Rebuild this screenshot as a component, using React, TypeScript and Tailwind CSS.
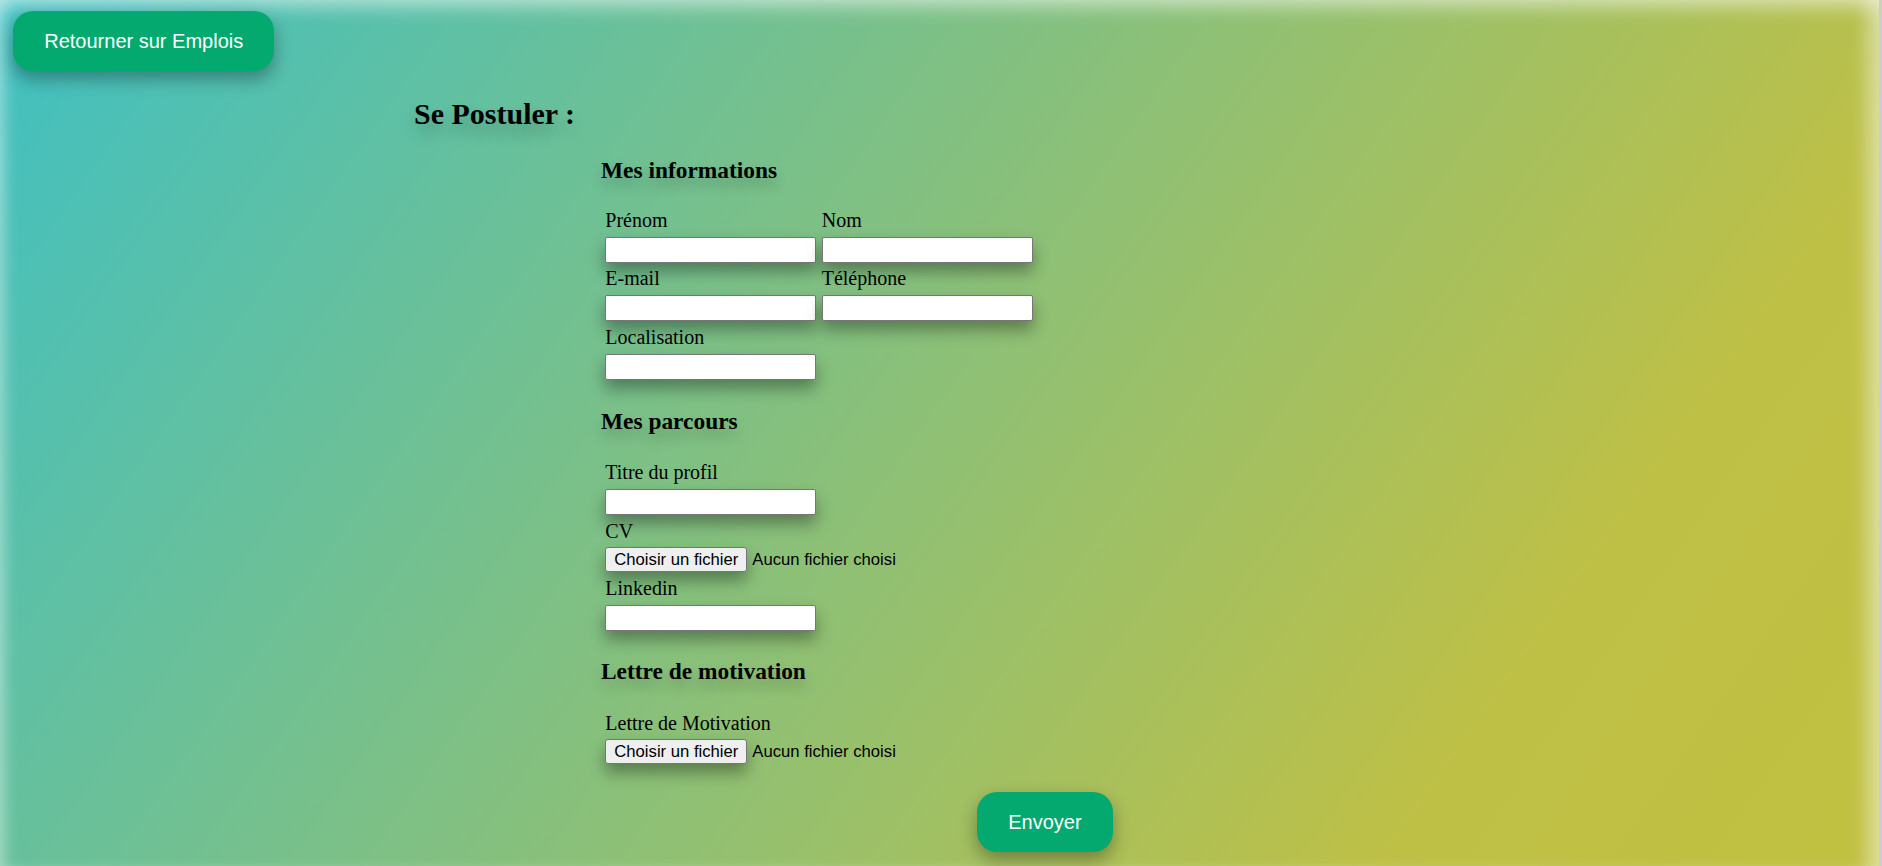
import React from "react";

const labelCls =
  "block h-[23px] leading-[23px] text-[20px] text-black font-['Liberation_Serif','Times_New_Roman',serif] whitespace-nowrap";
const inputCls =
  "block mt-[4.75px] h-[26px] w-[211px] bg-white border border-[#767676] rounded-[2px] px-[2px] text-[16.67px] font-['Liberation_Sans',Arial,sans-serif] shadow-[0_9px_16px_rgba(0,0,0,0.35)] outline-none";
const h3Cls =
  "w-fit h-[27px] leading-[27px] text-[23.4px] font-bold text-black font-['Liberation_Serif','Times_New_Roman',serif] [text-shadow:0_8px_14px_rgba(0,0,0,0.22)] whitespace-nowrap";
const btnCls =
  "block w-fit px-[31.25px] py-[18.5px] leading-[23px] text-[20px] text-white bg-[#03a96f] rounded-[20px] font-['Liberation_Sans',Arial,sans-serif] shadow-[0_8px_18px_rgba(0,0,0,0.33)] whitespace-nowrap";

function Field({ label }: { label: string }) {
  return (
    <div className="flex flex-col">
      <label className={labelCls}>{label}</label>
      <input type="text" className={inputCls} />
    </div>
  );
}

function FileField({ label }: { label: string }) {
  return (
    <div className="flex flex-col">
      <label className={labelCls}>{label}</label>
      <div className="mt-[4.75px] flex items-center h-[25px] font-['Liberation_Sans',Arial,sans-serif] text-[16.67px] text-black whitespace-nowrap">
        <span className="h-[25px] flex items-center px-[8px] bg-[#efefef] border border-[#767676] rounded-[3px] shadow-[0_9px_16px_rgba(0,0,0,0.35)]">
          Choisir un fichier
        </span>
        <span className="ml-[5px]">Aucun fichier choisi</span>
      </div>
    </div>
  );
}

export default function App() {
  return (
    <div className="h-[866px] w-full overflow-hidden border-r-[3px] border-r-[#cdcdcd] bg-[linear-gradient(125deg,#40c0c2_0%,#bec046_80%,#c0c040_100%)] shadow-[inset_0_18px_18px_-10px_rgba(255,255,255,0.45),inset_14px_0_14px_-8px_rgba(255,255,255,0.35),inset_-22px_0_18px_-10px_rgba(255,255,255,0.45)]">
      <div className="pl-[13px] pt-[11px]">
        <button type="button" className={btnCls}>
          Retourner sur Emplois
        </button>
      </div>

      <h2 className="ml-[414px] mt-[26.2px] w-fit h-[34px] leading-[34px] text-[30px] font-bold text-black font-['Liberation_Serif','Times_New_Roman',serif] [text-shadow:0_10px_16px_rgba(0,0,0,0.22)] whitespace-nowrap">
        Se Postuler :
      </h2>

      <form className="ml-[601px] w-fit" onSubmit={(e) => e.preventDefault()}>
        <h3 className={`mt-[25.4px] ${h3Cls}`}>Mes informations</h3>
        <div className="ml-[4.3px] mt-[25.4px] grid grid-cols-[211px_211px] gap-x-[5.4px] gap-y-[4.75px]">
          <Field label="Prénom" />
          <Field label="Nom" />
          <Field label="E-mail" />
          <Field label="Téléphone" />
          <Field label="Localisation" />
        </div>

        <h3 className={`mt-[27.8px] ${h3Cls}`}>Mes parcours</h3>
        <div className="ml-[4.3px] mt-[26.7px] flex flex-col gap-y-[4.75px]">
          <Field label="Titre du profil" />
          <FileField label="CV" />
          <Field label="Linkedin" />
        </div>

        <h3 className={`mt-[27.5px] ${h3Cls}`}>Lettre de motivation</h3>
        <div className="ml-[4.3px] mt-[26.2px] flex flex-col">
          <FileField label="Lettre de Motivation" />
        </div>

        <div className="ml-[376px] mt-[28px]">
          <button type="submit" className={btnCls}>
            Envoyer
          </button>
        </div>
      </form>
    </div>
  );
}
